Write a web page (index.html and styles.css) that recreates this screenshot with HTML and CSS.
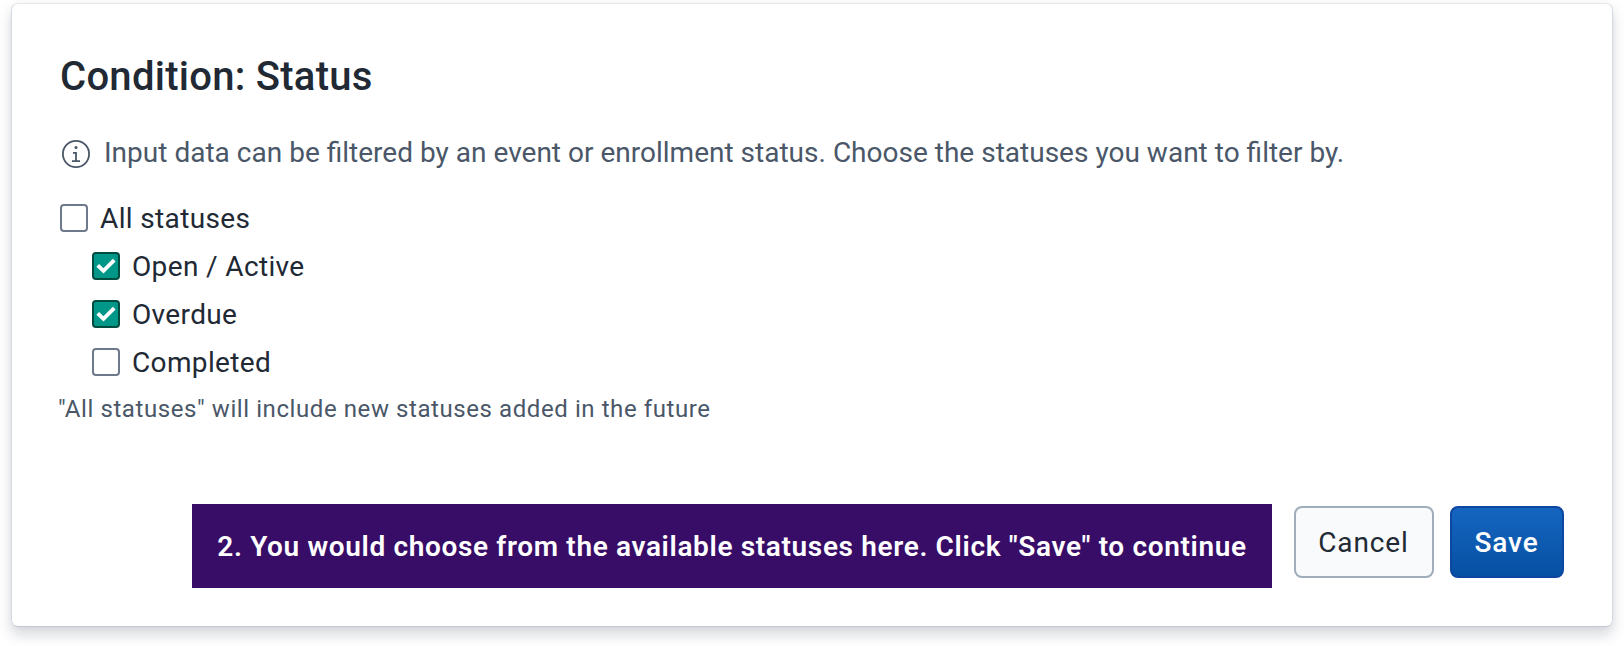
FILE: index.html
```html
<!DOCTYPE html>
<html lang="en">
<head>
<meta charset="utf-8">
<title>Condition: Status</title>
<link rel="stylesheet" href="styles.css">
</head>
<body>
<main class="modal">
  <h1 class="title"><span>Condition: Status</span></h1>
  <p class="info">
    <svg class="info-icon" viewBox="0 0 28 28" fill="none" stroke="#4a5768" stroke-width="1.8"><circle cx="14" cy="14" r="13.1"/><path d="M11 12.9h3v8.3M10 21.1h8"/><circle cx="14" cy="7.5" r="1.5" fill="#4a5768" stroke="none"/></svg>
    <span class="info-text">Input data can be filtered by an event or enrollment status. Choose the statuses you want to filter by.</span>
  </p>
  <div class="options">
    <label class="option"><span class="box"></span><span>All statuses</span></label>
    <label class="option nested"><span class="box checked"><svg viewBox="0 0 24 24"><path d="M4.2 12.3l5.8 5.6L20.7 7.2"/></svg></span><span>Open / Active</span></label>
    <label class="option nested"><span class="box checked"><svg viewBox="0 0 24 24"><path d="M4.2 12.3l5.8 5.6L20.7 7.2"/></svg></span><span>Overdue</span></label>
    <label class="option nested"><span class="box"></span><span>Completed</span></label>
  </div>
  <p class="help"><span>"All statuses" will include new statuses added in the future</span></p>
  <footer class="actions">
    <div class="callout"><span>2. You would choose from the available statuses here. Click "Save" to continue</span></div>
    <button class="button cancel"><span>Cancel</span></button>
    <button class="button save"><span>Save</span></button>
  </footer>
</main>
</body>
</html>
```
FILE: styles.css
```css
* { box-sizing: border-box; }
html { background: #fff; }
body { display: flow-root; margin: 0; height: 646px; overflow: hidden; background: #fff; font-family: Roboto, sans-serif; color: #212934; }
.modal { width: 1602px; height: 624px; margin: 3px 0 0 11px; padding: 48px; border: 1px solid; border-color: #e3e6ea #d5d9e2 #bfc7d1; border-radius: 7px; box-shadow: 0 8px 14px rgba(64,75,100,.21), 0 0 6px rgba(64,75,100,.04); }
.title { margin: 0; height: 50px; line-height: 50px; font-size: 40px; font-weight: 500; letter-spacing: .27px; }
.info { display: flex; align-items: center; gap: 14px; margin: 33px 0 0 2px; height: 38px; font-size: 28px; color: #4a5768; white-space: nowrap; }
.info-icon { width: 28px; height: 28px; }
.info-text { padding-bottom: 4px; word-spacing: .06px; }
.options { margin-top: 21px; }
.option { display: flex; align-items: center; gap: 12px; height: 48px; font-size: 28px; letter-spacing: .36px; }
.nested { margin-left: 32px; }
.box { width: 28px; height: 28px; border: 2px solid #6e7a8a; border-radius: 4px; }
.checked { background: #009688; border-color: #004d40; }
.box svg { display: block; width: 24px; height: 24px; fill: none; stroke: #fff; stroke-width: 3.8; transform: translate(-.5px, -1px); }
.help { margin: 5px 0 0 -2px; height: 36px; line-height: 36px; font-size: 24px; color: #4a5768; letter-spacing: .58px; }
.actions { display: flex; margin: 77px 0 0 132px; }
.callout { width: 1080px; height: 84px; padding-top: 1px; background: #380d68; color: #fff; font: 600 28px/84px Roboto, sans-serif; letter-spacing: .645px; text-align: center; white-space: nowrap; }
.button { height: 72px; margin-top: 2px; padding: 0 1px 0 0; border-radius: 8px; font: 28px Roboto, sans-serif; letter-spacing: .9px; }
.cancel { width: 140px; margin-left: 22px; border: 2px solid #a0adba; background: #f9fafb; color: #212934; }
.save { width: 114px; margin-left: 16px; border: 2px solid #0d47a1; background: linear-gradient(#1565c0, #0650a3) border-box; color: #fff; font-weight: 500; }
```
